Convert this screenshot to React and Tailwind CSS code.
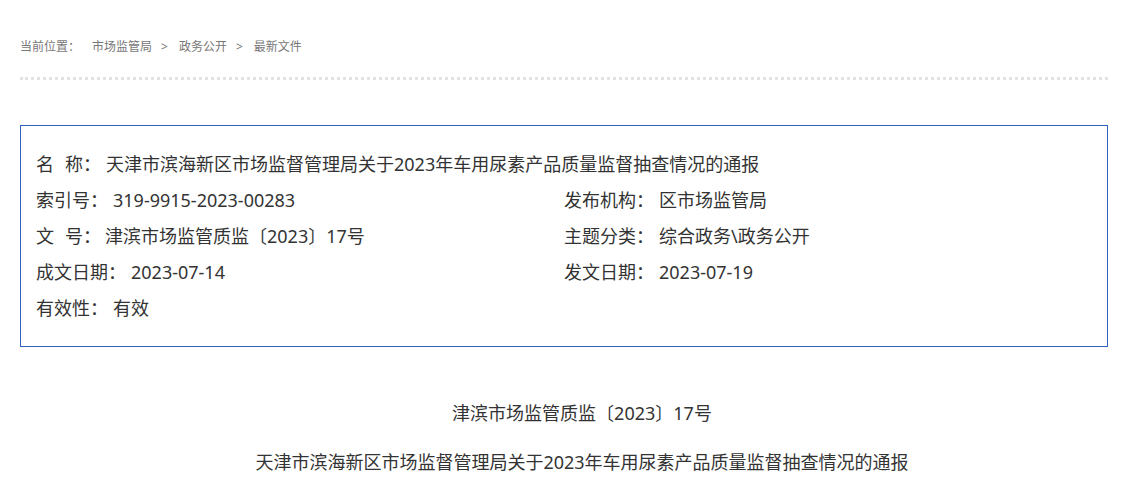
const font = { fontFamily: '"Noto Sans", "Noto Sans CJK SC", sans-serif' };

function Field({ label, value, wide }) {
  return (
    <div className={wide ? "col-span-2 flex" : "flex"}>
      <span className="whitespace-pre">{label}</span>
      <span className="ml-[5px]">{value}</span>
    </div>
  );
}

export default function App() {
  return (
    <div className="bg-white min-h-[491px] pl-[20px] pr-[26px] text-[#333]" style={font}>
      {/* breadcrumb */}
      <div className="pt-[35px] h-[59px] leading-[24px] text-[12px] text-[#777] flex">
        <span>当前位置：</span>
        <span className="ml-[12px]">市场监管局</span>
        <span className="ml-[9px] mr-[11px]">&gt;</span>
        <span>政务公开</span>
        <span className="ml-[9px] mr-[11px]">&gt;</span>
        <span>最新文件</span>
      </div>
      <div className="mt-[18px] border-t-[3px] border-dotted border-[#e2e2e2]" />

      {/* info box */}
      <div className="mt-[45px] border border-[#2f62bf] px-[15px] py-[20px] text-[18px] leading-[36px]">
        <div className="grid grid-cols-2">
          <div className="col-span-2 flex">
            <span>名</span>
            <span className="ml-[11px]">称：</span>
            <span className="ml-[5px]">天津市滨海新区市场监督管理局关于2023年车用尿素产品质量监督抽查情况的通报</span>
          </div>
          <Field label="索引号：" value="319-9915-2023-00283" />
          <Field label="发布机构：" value="区市场监管局" />
          <div className="flex">
            <span>文</span>
            <span className="ml-[11px]">号：</span>
            <span className="ml-[4px]">津滨市场监管质监〔2023〕17号</span>
          </div>
          <Field label="主题分类：" value="综合政务\政务公开" />
          <Field label="成文日期：" value="2023-07-14" />
          <Field label="发文日期：" value="2023-07-19" />
          <Field label="有效性：" value="有效" wide />
        </div>
      </div>

      {/* document heading */}
      <div className="mt-[48px] text-center indent-[36px] text-[18px] leading-[36px]">
        <p>津滨市场监管质监〔2023〕17号</p>
        <p className="mt-[13px]">天津市滨海新区市场监督管理局关于2023年车用尿素产品质量监督抽查情况的通报</p>
      </div>
    </div>
  );
}
